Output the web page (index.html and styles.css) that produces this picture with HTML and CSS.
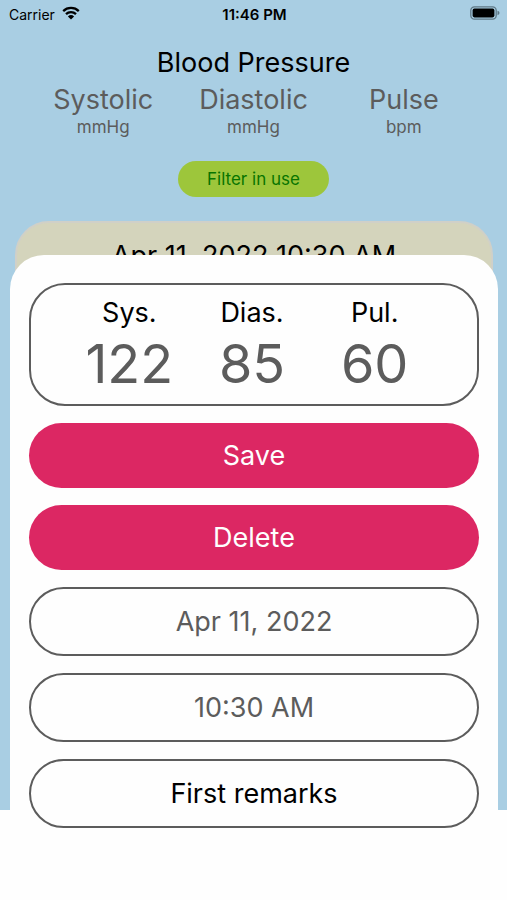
FILE: index.html
```html
<!DOCTYPE html>
<html lang="en">
<head>
<meta charset="utf-8">
<meta name="viewport" content="width=device-width, initial-scale=1">
<title>Blood Pressure</title>
<link rel="stylesheet" href="styles.css">
</head>
<body>
<main class="app">
  <div class="status">
    <div class="status-left">
      <span>Carrier</span>
      <svg class="wifi" viewBox="0 0 18 14" aria-hidden="true">
        <path d="M1.2 5.1a11.2 11.2 0 0 1 15.6 0M4 8.1a7.2 7.2 0 0 1 10 0" fill="none" stroke="#000" stroke-width="2.3"/>
        <path d="M9 13.6 5.9 10.4a4.5 4.5 0 0 1 6.2 0z"/>
      </svg>
    </div>
    <strong class="clock">11:46 PM</strong>
    <svg class="battery" viewBox="0 0 30 14" aria-hidden="true">
      <rect x=".8" y=".8" width="25.4" height="12.4" rx="3.6" fill="none" stroke="#5f7886" stroke-width="1.3"/>
      <rect x="2.6" y="2.6" width="21.8" height="8.8" rx="1.8"/>
      <path d="M27.5 4.8q2 .6 2 2.2t-2 2.2z" fill="#5f7886"/>
    </svg>
  </div>
  <header class="header">
    <h1 class="title">Blood Pressure</h1>
    <div class="measures">
      <div><div class="measure">Systolic</div><div class="unit">mmHg</div></div>
      <div><div class="measure">Diastolic</div><div class="unit">mmHg</div></div>
      <div><div class="measure">Pulse</div><div class="unit">bpm</div></div>
    </div>
    <button class="filter" type="button">Filter in use</button>
  </header>
  <article class="entry">Apr 11, 2022 10:30 AM</article>
  <form class="sheet">
    <div class="readings">
      <label class="reading">Sys.<input class="value" type="text" inputmode="numeric" value="122"></label>
      <label class="reading">Dias.<input class="value" type="text" inputmode="numeric" value="85"></label>
      <label class="reading">Pul.<input class="value" type="text" inputmode="numeric" value="60"></label>
    </div>
    <button class="action" type="button">Save</button>
    <button class="action" type="button">Delete</button>
    <button class="field" type="button">Apr 11, 2022</button>
    <button class="field" type="button">10:30 AM</button>
    <input class="field remarks" type="text" aria-label="Remarks" value="First remarks">
  </form>
</main>
</body>
</html>
```
FILE: styles.css
```css
* { box-sizing: border-box; }

body {
  margin: 0;
  background: #fefefe;
  color: #000;
  font-family: Inter, "Liberation Sans", sans-serif;
}

button, input { font: inherit; }

.app {
  min-height: 100vh;
  background: linear-gradient(#a9cee3 90%, #fefefe 90%);
}

.status {
  display: grid;
  grid-template-columns: 1fr auto 1fr;
  align-items: center;
  height: 28px;
  padding: 0 7px 0 9px;
  font-size: 14px;
}

.status-left { display: flex; align-items: center; gap: 7px; }
.wifi { width: 18px; height: 14px; margin-bottom: 2px; }
.clock { font-size: 15px; font-weight: 600; }
.battery { width: 30px; height: 14px; justify-self: end; margin-bottom: 2px; }

.header {
  display: flex;
  flex-direction: column;
  align-items: center;
  padding: 16px 28px 0;
}

.title {
  margin: 0;
  font-size: 27px;
  line-height: 38px;
  font-weight: 400;
}

.measures {
  display: grid;
  grid-template-columns: repeat(3, 1fr);
  align-self: stretch;
  color: #5c5c5c;
  text-align: center;
}

.measure { font-size: 27px; line-height: 36px; }
.unit { font-size: 17px; line-height: 18px; }

.filter {
  height: 36px;
  margin-top: 25px;
  padding: 0 29px;
  border: 0;
  border-radius: 18px;
  background: #9dc63b;
  color: #087500;
  font-size: 17px;
}

.entry {
  height: 120px;
  margin: 24px 14px 0 15px;
  padding-top: 16px;
  border: 2px solid #d0d0c8;
  border-radius: 34px;
  background: #d4d4bc;
  font-size: 27px;
  line-height: 34px;
  text-align: center;
}

.sheet {
  position: relative;
  display: flex;
  flex-direction: column;
  gap: 17px;
  margin: -86px 9px 0 10px;
  padding: 28px 19px 40px;
  border-radius: 34px 34px 0 0;
  background: #fefefe;
  font-size: 27px;
}

.readings {
  display: grid;
  grid-template-columns: repeat(3, 1fr);
  height: 123px;
  padding: 10px 41px 0 37px;
  border: 2px solid #5c5c5c;
  border-radius: 36px;
}

.reading { line-height: 36px; text-align: center; }

.value {
  display: block;
  width: 100%;
  height: 64px;
  padding: 0;
  border: 0;
  background: none;
  color: #5c5c5c;
  font-size: 54px;
  text-align: center;
}

.action {
  height: 65px;
  border: 0;
  border-radius: 33px;
  background: #dc2763;
  color: #fefefe;
}

.field {
  width: 100%;
  height: 69px;
  border: 2px solid #5c5c5c;
  border-radius: 35px;
  background: #fefefe;
  color: #5c5c5c;
  text-align: center;
}

.remarks { color: #000; }
```
